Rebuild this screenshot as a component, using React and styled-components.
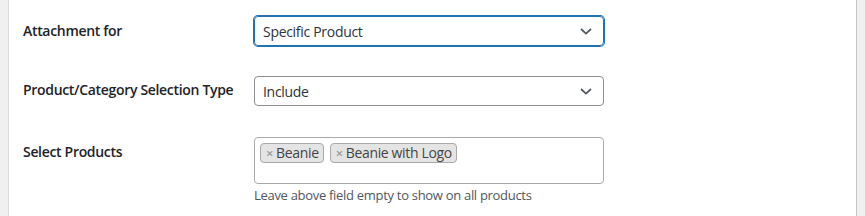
import React from "react";
import styled, { createGlobalStyle } from "styled-components";

const Global = createGlobalStyle`
  html, body { margin: 0; padding: 0; background: #f0f0f1; }
  body { font-family: "Open Sans", "Noto Sans", sans-serif; color: #1d2327; }
`;

const Page = styled.div`
  display: flex;
  height: 216px;
  padding: 0 8px;
  background: #f0f0f1;
`;

const Panel = styled.div`
  flex: 1;
  background: #fff;
  border-left: 1px solid #dcdcde;
  border-right: 1px solid #c3c4c7;
  padding: 0 14px;
`;

const Row = styled.div`
  display: grid;
  grid-template-columns: 231px 350px;
  align-items: start;
  padding-top: ${(p) => p.$top}px;
  padding-bottom: ${(p) => p.$bottom}px;
`;

const Label = styled.div`
  font-size: 14px;
  font-weight: 600;
  line-height: 20px;
  letter-spacing: -0.32px;
  padding-top: ${(p) => p.$top}px;
  color: #1d2327;
`;

const Select = styled.div`
  box-sizing: border-box;
  height: 30px;
  border: 1px solid ${(p) => (p.$focus ? "#2271b1" : "#8c8f94")};
  box-shadow: ${(p) => (p.$focus ? "0 0 0 1px #2271b1" : "none")};
  border-radius: 4px;
  display: flex;
  align-items: center;
  justify-content: space-between;
  padding: 0 9px 0 8px;
  font-size: 14px;
  letter-spacing: -0.3px;
  color: #2c3338;
`;

const Chevron = () => (
  <svg width="16" height="16" viewBox="0 0 16 16">
    <path d="M3 6 L8 10.6 L13 6" fill="none" stroke="#50575e" strokeWidth="1.7" />
  </svg>
);

const Field = styled.div`
  display: flex;
  flex-direction: column;
`;

const MultiBox = styled.div`
  box-sizing: border-box;
  height: 47px;
  border: 1px solid #aaa;
  border-radius: 4px;
  padding: 5px 5px;
  display: flex;
  align-items: flex-start;
  gap: 6px;
`;

const Tag = styled.span`
  display: inline-flex;
  align-items: center;
  height: 20px;
  box-sizing: border-box;
  background: #e4e4e4;
  border: 1px solid #aaa;
  border-radius: 4px;
  padding: 0 4px 0 5px;
  font-size: 14px;
  letter-spacing: -0.35px;
  color: #444;
  line-height: 18px;
`;

const Remove = styled.span`
  color: #999;
  font-size: 13px;
  margin-right: 3px;
  font-weight: 600;
`;

const Desc = styled.div`
  font-size: 13px;
  letter-spacing: -0.3px;
  color: #50575e;
  margin-top: 2px;
  line-height: 18px;
`;

export default function App() {
  return (
    <>
      <Global />
      <Page>
        <Panel>
          <Row $top={16} $bottom={14}>
            <Label $top={5}>Attachment for</Label>
            <Select $focus>
              <span>Specific Product</span>
              <Chevron />
            </Select>
          </Row>
          <Row $top={16} $bottom={14}>
            <Label $top={4}>Product/Category Selection Type</Label>
            <Select>
              <span>Include</span>
              <Chevron />
            </Select>
          </Row>
          <Row $top={17} $bottom={0}>
            <Label $top={5}>Select Products</Label>
            <Field>
              <MultiBox>
                <Tag><Remove>×</Remove>Beanie</Tag>
                <Tag><Remove>×</Remove>Beanie with Logo</Tag>
              </MultiBox>
              <Desc>Leave above field empty to show on all products</Desc>
            </Field>
          </Row>
        </Panel>
      </Page>
    </>
  );
}
